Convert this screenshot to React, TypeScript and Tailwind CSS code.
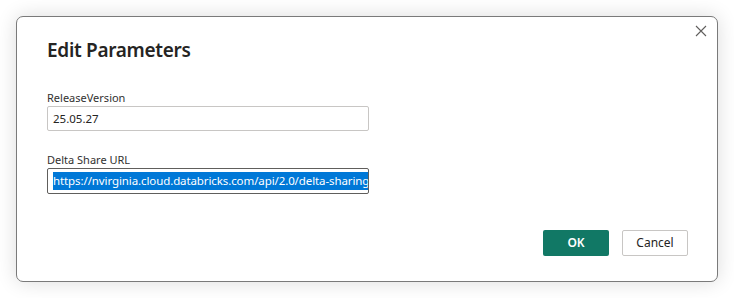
import React from "react";

const font = { fontFamily: '"Noto Sans", "Open Sans", sans-serif' };

function CloseIcon() {
  return (
    <svg width="12" height="12" viewBox="0 0 12 12" className="block">
      <path d="M1 1 L11 11 M11 1 L1 11" stroke="#605e5c" strokeWidth="1.1" fill="none" />
    </svg>
  );
}

export default function App() {
  return (
    <div className="w-[734px] h-[298px] bg-white pt-[16px] pl-[16px]" style={font}>
      <div className="relative w-[702px] h-[266px] bg-white border border-[#7a7a7a] rounded-[7px] shadow-[0_0_20px_rgba(0,0,0,0.14)] flex flex-col pl-[30px] pr-[29px]">
        <button className="absolute top-[8px] right-[10px] p-0">
          <CloseIcon />
        </button>
        <h1 className="mt-[20px] text-[19px] leading-[26px] tracking-[-0.3px] font-semibold text-[#252423]">
          Edit Parameters
        </h1>
        <div className="mt-[27px] flex flex-col">
          <label className="text-[11px] leading-[15px] text-[#323130]">ReleaseVersion</label>
          <div className="mt-[1px] w-[322px] h-[25px] border border-[#c8c6c4] rounded-[2px] flex items-center px-[5px] text-[11.5px] text-[#252423]">
            25.05.27
          </div>
        </div>
        <div className="mt-[21px] flex flex-col">
          <label className="text-[11px] leading-[15px] text-[#323130]">Delta Share URL</label>
          <div className="mt-[1px] w-[322px] h-[26px] border border-[#605e5c] rounded-[2px] flex items-center pl-[5px] overflow-hidden whitespace-nowrap text-[11.5px] tracking-[-0.1px]">
            <span className="bg-[#0078d7] text-white leading-[18px]">
              https://nvirginia.cloud.databricks.com/api/2.0/delta-sharing/
            </span>
          </div>
        </div>
        <div className="mt-auto mb-[25px] flex justify-end gap-[13px]">
          <button className="w-[66px] h-[26px] bg-[#117865] rounded-[2px] text-white text-[12px] font-semibold">
            OK
          </button>
          <button className="w-[66px] h-[26px] bg-white border border-[#c8c6c4] rounded-[2px] text-[#252423] text-[12px]">
            Cancel
          </button>
        </div>
      </div>
    </div>
  );
}
